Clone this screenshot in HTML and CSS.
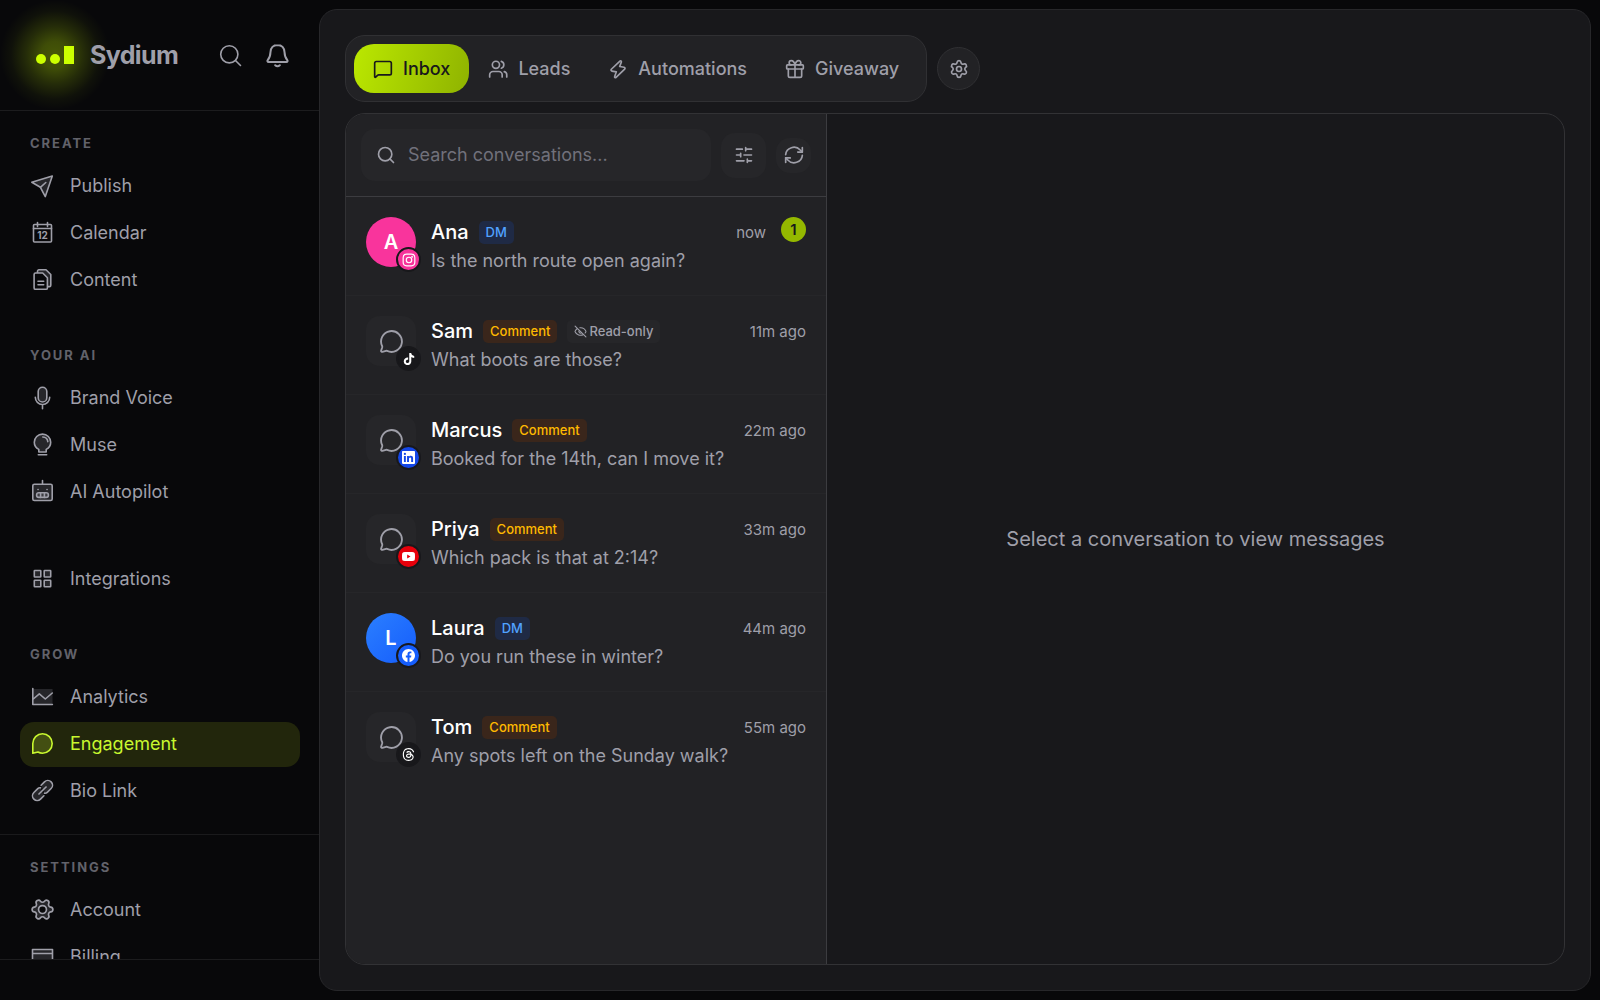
FILE: index.html
```
<!DOCTYPE html>
<html lang="en">
<head>
    <meta charset="UTF-8">
    <meta name="viewport" content="width=device-width, initial-scale=1.0">
    <title>Sydium - Engagement</title>
    <link rel="stylesheet" href="styles.css">
</head>
<body>

    <!-- Shared icons -->
    <svg class="sprite" aria-hidden="true">
        <symbol id="icon-search" viewBox="0 0 24 24"><circle cx="11" cy="11" r="8"/><path d="m21 21-4.3-4.3"/></symbol>
        <symbol id="icon-bubble" viewBox="0 0 24 24"><path d="M2.992 16.342a2 2 0 0 1 .094 1.167l-1.065 3.29a1 1 0 0 0 1.236 1.168l3.413-.998a2 2 0 0 1 1.099.092 10 10 0 1 0-4.777-4.719"/></symbol>
        <symbol id="icon-gear" viewBox="0 0 24 24"><path d="M9.671 4.136a2.34 2.34 0 0 1 4.659 0 2.34 2.34 0 0 0 3.319 1.915 2.34 2.34 0 0 1 2.33 4.033 2.34 2.34 0 0 0 0 3.831 2.34 2.34 0 0 1-2.33 4.033 2.34 2.34 0 0 0-3.319 1.915 2.34 2.34 0 0 1-4.659 0 2.34 2.34 0 0 0-3.32-1.915 2.34 2.34 0 0 1-2.33-4.033 2.34 2.34 0 0 0 0-3.831A2.34 2.34 0 0 1 6.35 6.051a2.34 2.34 0 0 0 3.319-1.915"/><circle cx="12" cy="12" r="3"/></symbol>
    </svg>

    <div class="app">
        <aside class="sidebar">
            <div class="sidebar-header">
                <a href="#" class="brand">
                    <span class="brand-logo">
                        <svg width="50" height="50" viewBox="0 0 50 50" fill="#ccff00"><circle cx="11" cy="29" r="5"/><circle cx="25" cy="29" r="5"/><path d="M34 16h10v18H34z"/></svg>
                    </span>
                    <span class="brand-name">Sydium</span>
                </a>
                <div class="header-actions">
                    <button type="button" class="icon-button" aria-label="Search">
                        <svg class="icon" width="25" height="25" viewBox="0 0 25 25"><circle cx="11.300" cy="11.300" r="8.600"/><path d="m17.500 17.500 5 5"/></svg>
                    </button>
                    <button type="button" class="icon-button" aria-label="Notifications">
                        <svg class="icon icon-bold" width="25" height="25" viewBox="0 0 25 25"><path d="M12.500 2C8.200 2 5.700 5 5.500 9c-.2 4-.8 6-2.700 8-.8.900-.3 2 .8 2h17.800c1.100 0 1.600-1.100.8-2-1.900-2-2.500-4-2.700-8-.2-4-2.700-7-7-7Z"/><path d="M10.200 22.200c1.300 1.200 3.300 1.200 4.600 0"/></svg>
                    </button>
                </div>
            </div>

            <nav class="sidebar-nav">
                <div class="nav-group">
                    <section class="nav-section">
                        <h2>Create</h2>
                        <a href="#" class="nav-item">
                            <svg class="icon duo" width="25" height="25" viewBox="0 0 25 25"><path d="M22.300 3 1.800 9.300l8.600 5 4.900 9.300Z"/><path d="m10.400 14.300 5.400-4.800"/></svg>
                            Publish
                        </a>
                        <a href="#" class="nav-item">
                            <svg class="icon" width="25" height="25" viewBox="0 0 25 25"><rect x="3.500" y="4.500" width="18" height="17.500" rx="1"/><path d="M3.500 8.500h18M7.500 2.500v4M17.500 2.500v4"/><text x="12.500" y="19" class="icon-date">12</text></svg>
                            Calendar
                        </a>
                        <a href="#" class="nav-item">
                            <svg class="icon duo" width="25" height="25" viewBox="0 0 25 25"><path d="M7.500 6V4.200c0-.8.6-1.400 1.400-1.400H16l4.800 4.700v10.700c0 .8-.6 1.400-1.400 1.400h-2"/><path class="solid" d="M5.500 6h7.200l4.700 4.700v10.200c0 .8-.6 1.400-1.400 1.400H5.500c-.8 0-1.400-.6-1.400-1.400V7.400C4.100 6.600 4.700 6 5.500 6Z"/><path d="M8 14.200h5.700M8 17.700h5.700"/></svg>
                            Content
                        </a>
                    </section>

                    <section class="nav-section">
                        <h2>Your AI</h2>
                        <a href="#" class="nav-item">
                            <svg class="icon duo" width="25" height="25" viewBox="0 0 25 25"><rect x="8.200" y="2.200" width="8.600" height="14.800" rx="4.300"/><path class="no-fill" d="M5.300 12.300c0 4 3.200 7.200 7.200 7.200s7.200-3.200 7.200-7.200M12.500 19.500v4.300"/></svg>
                            Brand Voice
                        </a>
                        <a href="#" class="nav-item">
                            <svg class="icon duo" width="25" height="25" viewBox="0 0 25 25"><path d="M8.800 20v-2.600C6 16 4.300 13.400 4.300 10.300a8.200 8.200 0 0 1 16.400 0c0 3.100-1.700 5.700-4.500 7.100V20Z"/><path class="no-fill" d="M12.800 5c2.700.1 4.700 2 5 4.600M8.300 22.800h8.400"/></svg>
                            Muse
                        </a>
                        <a href="#" class="nav-item">
                            <svg class="icon duo" width="25" height="25" viewBox="0 0 25 25"><rect x="2.800" y="5.200" width="19.400" height="16.300" rx="1.600"/><path d="M12.500 1.500v3.700M8 10.500h.1M17 10.500h.1"/><rect x="6.600" y="13.800" width="11.800" height="4.600" rx="2.200"/><path d="M10.600 13.800v4.600M14.400 13.800v4.600"/></svg>
                            AI Autopilot
                        </a>
                    </section>

                    <section class="nav-section">
                        <a href="#" class="nav-item">
                            <svg class="icon duo" width="25" height="25" viewBox="0 0 25 25"><rect x="4.300" y="4.500" width="6.500" height="6.500" rx=".5"/><rect x="14.200" y="4.500" width="6.500" height="6.500" rx=".5"/><rect x="4.300" y="14.200" width="6.500" height="6.500" rx=".5"/><rect x="14.200" y="14.200" width="6.500" height="6.500" rx=".5"/></svg>
                            Integrations
                        </a>
                    </section>

                    <section class="nav-section">
                        <h2>Grow</h2>
                        <a href="#" class="nav-item">
                            <svg class="icon duo" width="25" height="25" viewBox="0 0 25 25"><path class="no-line" d="M3 5h19.500v15.500H3Z"/><path class="no-fill" d="M2.800 4.500v16h19.600M3.300 15l6-5.200 6 5.200 7-6"/></svg>
                            Analytics
                        </a>
                        <a href="#" class="nav-item active" aria-current="page">
                            <svg class="icon duo" width="25" height="25" viewBox="0 0 25 25"><path d="M2.800 22.200V12.500a9.700 9.700 0 1 1 9.700 9.700c-1.700 0-3.200-.4-4.600-1.200Z"/></svg>
                            Engagement
                        </a>
                        <a href="#" class="nav-item">
                            <svg class="icon duo" width="25" height="25" viewBox="0 0 25 25"><g transform="rotate(-45 12.500 12.500)"><path d="M9.800 17.200H5a4.700 4.700 0 0 1 0-9.400h5.500a3 3 0 0 1 2.500 1.400"/><path d="M15.200 7.800H20a4.700 4.700 0 0 1 0 9.400h-5.500a3 3 0 0 1-2.500-1.400"/><path d="M7.500 12.500h10"/></g></svg>
                            Bio Link
                        </a>
                    </section>
                </div>

                <div class="nav-group">
                    <section class="nav-section">
                        <h2>Settings</h2>
                        <a href="#" class="nav-item">
                            <svg class="icon duo" width="25" height="25" viewBox="0 0 24 24"><g transform="rotate(30 12 12)"><path d="M9.671 4.136a2.340 2.340 0 0 1 4.659 0 2.340 2.340 0 0 0 3.319 1.915 2.340 2.340 0 0 1 2.330 4.033 2.340 2.340 0 0 0 0 3.831 2.340 2.340 0 0 1-2.330 4.033 2.340 2.340 0 0 0-3.319 1.915 2.340 2.340 0 0 1-4.659 0 2.340 2.340 0 0 0-3.320-1.915 2.340 2.340 0 0 1-2.330-4.033 2.340 2.340 0 0 0 0-3.831A2.340 2.340 0 0 1 6.350 6.051a2.340 2.340 0 0 0 3.319-1.915"/></g><circle class="solid" cx="12" cy="12" r="3.800"/></svg>
                            Account
                        </a>
                        <a href="#" class="nav-item">
                            <svg class="icon duo" width="25" height="25" viewBox="0 0 25 25"><path d="M2.500 5.500h20v14.500h-20ZM2.500 9.500h20"/></svg>
                            Billing
                        </a>
                    </section>
                </div>
            </nav>

            <div class="sidebar-footer"></div>
        </aside>

        <main class="main">
            <div class="toolbar">
                <div class="tabs" role="tablist">
                    <button type="button" class="tab active" role="tab" aria-selected="true">
                        <svg class="icon" width="20" height="20" viewBox="0 0 24 24"><path d="M22 17a2 2 0 0 1-2 2H6.828a2 2 0 0 0-1.414.586l-2.202 2.202A.710.710 0 0 1 2 21.286V5a2 2 0 0 1 2-2h16a2 2 0 0 1 2 2z"/></svg>
                        Inbox
                    </button>
                    <button type="button" class="tab" role="tab" aria-selected="false">
                        <svg class="icon" width="20" height="20" viewBox="0 0 24 24"><path d="M17 21.500v-2.500a4 4 0 0 0-4-4H6a4 4 0 0 0-4 4v2.500"/><circle cx="9.500" cy="7" r="4.300"/><path d="M16 2.900a4.300 4.300 0 0 1 0 8.200M22.500 21.500v-2.500a4 4 0 0 0-3-3.870"/></svg>
                        Leads
                    </button>
                    <button type="button" class="tab" role="tab" aria-selected="false">
                        <svg class="icon" width="20" height="20" viewBox="0 0 24 24"><path d="M14.300 2.500 4 12.300c-.8.800-.4 2 .7 2.200l5.300.9-2 5.500c-.4 1.200.8 1.900 1.700 1.100L20 12.100c.8-.8.4-2-.7-2.200L14 9l2-5.300c.4-1.300-.8-2-1.700-1.200Z"/></svg>
                        Automations
                    </button>
                    <button type="button" class="tab" role="tab" aria-selected="false">
                        <svg class="icon" width="20" height="20" viewBox="0 0 24 24"><rect x="2" y="7" width="20" height="5" rx="1"/><path d="M12 7v15M20 12v8a2 2 0 0 1-2 2H6a2 2 0 0 1-2-2v-8M7.500 7a2.500 2.500 0 0 1 0-5A4.800 8 0 0 1 12 7a4.800 8 0 0 1 4.500-5 2.500 2.500 0 0 1 0 5"/></svg>
                        Giveaway
                    </button>
                </div>
                <button type="button" class="settings-button" aria-label="Engagement settings">
                    <svg class="icon" width="20" height="20"><use href="#icon-gear"/></svg>
                </button>
            </div>

            <div class="inbox">
                <section class="conversations">
                    <div class="search-bar">
                        <label class="search-field">
                            <svg class="icon" width="20" height="20"><use href="#icon-search"/></svg>
                            <input type="text" placeholder="Search conversations..." aria-label="Search conversations">
                        </label>
                        <button type="button" class="square-button" aria-label="Filters">
                            <svg class="icon" width="20" height="20" viewBox="0 0 24 24"><path d="M10 5H3M12 19H3M14 3v4M16 17v4M21 12h-9M21 19h-5M21 5h-7M8 10v4M8 12H3"/></svg>
                        </button>
                        <button type="button" class="square-button small" aria-label="Refresh">
                            <svg class="icon" width="20" height="20" viewBox="0 0 24 24"><path d="M2 11.500a10 9.500 0 0 1 17.500-5.500L22 8.500"/><path d="M22 3v5.500h-5.500M22 12.500a10 9.500 0 0 1-17.500 5.500L2 15.500"/><path d="M7.500 15.500H2V21"/></svg>
                        </button>
                    </div>

                    <ul class="conversation-list">
                        <li>
                            <button type="button" class="conversation">
                                <span class="avatar pink">A
                                    <span class="platform instagram"><svg width="14" height="14" viewBox="0 0 24 24" fill="none" stroke="#fff" stroke-width="2"><rect x="2" y="2" width="20" height="20" rx="6"/><circle cx="12" cy="12" r="4.700"/><circle cx="17.500" cy="6.500" r=".6"/></svg></span>
                                </span>
                                <span class="details">
                                    <span class="top-line"><span class="name">Ana</span><span class="tag dm">DM</span><span class="time">now</span></span>
                                    <span class="message">Is the north route open again?</span>
                                </span>
                                <span class="unread">1</span>
                            </button>
                        </li>
                        <li>
                            <button type="button" class="conversation">
                                <span class="avatar comment"><svg class="icon" width="25" height="25"><use href="#icon-bubble"/></svg>
                                    <span class="platform tiktok"><svg width="12" height="12" viewBox="0 0 24 24" fill="#fff"><path d="M12.525.020c1.310-.020 2.610-.010 3.910-.020.080 1.530.630 3.090 1.750 4.170 1.120 1.110 2.700 1.620 4.240 1.790v4.030c-1.440-.050-2.890-.350-4.200-.970-.570-.260-1.100-.590-1.620-.930-.010 2.920.010 5.840-.020 8.750-.080 1.400-.540 2.790-1.350 3.940-1.310 1.920-3.580 3.170-5.910 3.210-1.430.080-2.860-.310-4.080-1.030-2.020-1.190-3.440-3.370-3.650-5.710-.020-.5-.030-1-.010-1.490.180-1.900 1.120-3.720 2.580-4.960 1.660-1.440 3.980-2.130 6.150-1.720.020 1.480-.040 2.960-.040 4.440-.990-.320-2.150-.230-3.020.370-.630.410-1.110 1.040-1.360 1.750-.210.510-.150 1.070-.140 1.610.240 1.640 1.820 3.020 3.500 2.870 1.120-.010 2.190-.660 2.770-1.610.190-.330.400-.670.410-1.060.100-1.790.060-3.570.070-5.360.010-4.030-.010-8.050.020-12.070z"/></svg></span>
                                </span>
                                <span class="details">
                                    <span class="top-line"><span class="name">Sam</span><span class="tag">Comment</span><span class="tag read-only"><svg class="icon" width="13" height="13" viewBox="0 0 24 24"><path d="M10.733 5.076a10.744 10.744 0 0 1 11.205 6.575 1 1 0 0 1 0 .696 10.747 10.747 0 0 1-1.444 2.490M14.084 14.158a3 3 0 0 1-4.242-4.242M17.479 17.499a10.750 10.750 0 0 1-15.417-5.151 1 1 0 0 1 0-.696 10.750 10.750 0 0 1 4.446-5.143M2 2l20 20"/></svg>Read-only</span><span class="time">11m ago</span></span>
                                    <span class="message">What boots are those?</span>
                                </span>
                            </button>
                        </li>
                        <li>
                            <button type="button" class="conversation">
                                <span class="avatar comment"><svg class="icon" width="25" height="25"><use href="#icon-bubble"/></svg>
                                    <span class="platform linkedin"><svg width="13" height="13" viewBox="0 0 24 24" fill="#fff"><path d="M20.447 20.452h-3.554v-5.569c0-1.328-.027-3.037-1.852-3.037-1.853 0-2.136 1.445-2.136 2.939v5.667H9.351V9h3.414v1.561h.046c.477-.900 1.637-1.850 3.370-1.850 3.601 0 4.267 2.370 4.267 5.455v6.286zM5.337 7.433a2.062 2.062 0 1 1 0-4.125 2.062 2.062 0 0 1 0 4.125zm1.782 13.019H3.555V9h3.564v11.452zM22.225 0H1.771C.792 0 0 .774 0 1.729v20.542C0 23.227.792 24 1.771 24h20.451C23.200 24 24 23.227 24 22.271V1.729C24 .774 23.200 0 22.222 0h.003z"/></svg></span>
                                </span>
                                <span class="details">
                                    <span class="top-line"><span class="name">Marcus</span><span class="tag">Comment</span><span class="time">22m ago</span></span>
                                    <span class="message">Booked for the 14th, can I move it?</span>
                                </span>
                            </button>
                        </li>
                        <li>
                            <button type="button" class="conversation">
                                <span class="avatar comment"><svg class="icon" width="25" height="25"><use href="#icon-bubble"/></svg>
                                    <span class="platform youtube"><svg width="13" height="13" viewBox="0 0 24 24" fill="#fff"><path d="M23.498 6.186a3.016 3.016 0 0 0-2.122-2.136C19.505 3.545 12 3.545 12 3.545s-7.505 0-9.377.505A3.017 3.017 0 0 0 .502 6.186C0 8.070 0 12 0 12s0 3.930.502 5.814a3.016 3.016 0 0 0 2.122 2.136c1.871.505 9.376.505 9.376.505s7.505 0 9.377-.505a3.015 3.015 0 0 0 2.122-2.136C24 15.930 24 12 24 12s0-3.930-.502-5.814zM9.545 15.568V8.432L15.818 12l-6.273 3.568z"/></svg></span>
                                </span>
                                <span class="details">
                                    <span class="top-line"><span class="name">Priya</span><span class="tag">Comment</span><span class="time">33m ago</span></span>
                                    <span class="message">Which pack is that at 2:14?</span>
                                </span>
                            </button>
                        </li>
                        <li>
                            <button type="button" class="conversation">
                                <span class="avatar blue">L
                                    <span class="platform facebook"><svg width="13" height="13" viewBox="0 0 24 24" fill="#fff"><path d="M24 12.073c0-6.627-5.373-12-12-12s-12 5.373-12 12c0 5.990 4.388 10.954 10.125 11.854v-8.385H7.078v-3.470h3.047V9.430c0-3.007 1.792-4.669 4.533-4.669 1.312 0 2.686.235 2.686.235v2.953H15.830c-1.491 0-1.956.925-1.956 1.874v2.250h3.328l-.532 3.470h-2.796v8.385C19.612 23.027 24 18.062 24 12.073z"/></svg></span>
                                </span>
                                <span class="details">
                                    <span class="top-line"><span class="name">Laura</span><span class="tag dm">DM</span><span class="time">44m ago</span></span>
                                    <span class="message">Do you run these in winter?</span>
                                </span>
                            </button>
                        </li>
                        <li>
                            <button type="button" class="conversation">
                                <span class="avatar comment"><svg class="icon" width="25" height="25"><use href="#icon-bubble"/></svg>
                                    <span class="platform threads"><svg width="13" height="13" viewBox="0 0 24 24" fill="#fff"><path d="M12.186 24h-.007c-3.581-.024-6.334-1.205-8.184-3.509C2.350 18.440 1.500 15.586 1.472 12.010v-.017c.030-3.579.879-6.430 2.525-8.482C5.845 1.205 8.600.024 12.180 0h.014c2.746.020 5.043.725 6.826 2.098 1.677 1.290 2.858 3.130 3.509 5.467l-2.040.569c-1.104-3.960-3.898-5.984-8.304-6.015-2.910.022-5.110.936-6.540 2.717C4.307 6.504 3.616 8.914 3.589 12c.027 3.086.718 5.496 2.057 7.164 1.430 1.783 3.631 2.698 6.540 2.717 2.623-.020 4.358-.631 5.800-2.045 1.647-1.613 1.618-3.593 1.090-4.798-.310-.710-.873-1.300-1.634-1.750-.192 1.352-.622 2.446-1.284 3.272-.886 1.102-2.140 1.704-3.730 1.790-1.202.065-2.361-.218-3.259-.801-1.063-.689-1.685-1.740-1.752-2.964-.065-1.190.408-2.285 1.330-3.082.880-.760 2.119-1.207 3.583-1.291a13.853 13.853 0 0 1 3.020.142c-.126-.742-.375-1.332-.750-1.757-.513-.586-1.308-.883-2.359-.890h-.029c-.844 0-1.992.232-2.721 1.320L7.734 7.847c.980-1.454 2.568-2.256 4.478-2.256h.044c3.194.020 5.097 1.975 5.287 5.388.108.046.216.094.321.142 1.490.700 2.580 1.761 3.154 3.070.797 1.820.871 4.790-1.548 7.158-1.850 1.810-4.094 2.628-7.277 2.650Zm1.003-11.690c-.242 0-.487.007-.739.021-1.836.103-2.980.946-2.916 2.143.067 1.256 1.452 1.839 2.784 1.767 1.224-.065 2.818-.543 3.086-3.710a10.500 10.500 0 0 0-2.215-.221z"/></svg></span>
                                </span>
                                <span class="details">
                                    <span class="top-line"><span class="name">Tom</span><span class="tag">Comment</span><span class="time">55m ago</span></span>
                                    <span class="message">Any spots left on the Sunday walk?</span>
                                </span>
                            </button>
                        </li>
                    </ul>
                </section>

                <section class="thread">
                    <p>Select a conversation to view messages</p>
                </section>
            </div>
        </main>
    </div>

</body>
</html>
```
FILE: styles.css
```
* {
    box-sizing: border-box;
}

body {
    margin: 0;
    background-color: #08080a;
    color: #9f9fa9;
    font-family: Inter, 'Liberation Sans', sans-serif;
    font-size: 18px;
}

a {
    color: inherit;
    text-decoration: none;
}

button {
    padding: 0;
    border: none;
    background: none;
    color: inherit;
    font: inherit;
    cursor: pointer;
}

.sprite {
    display: none;
}

.icon {
    flex-shrink: 0;
    fill: none;
    stroke: currentColor;
    stroke-width: 1.6;
    stroke-linecap: round;
    stroke-linejoin: round;
}

.app {
    display: flex;
    height: 100vh;
}

/* Sidebar */
.sidebar {
    display: flex;
    flex-direction: column;
    flex: 0 0 319px;
}

.sidebar-header {
    display: flex;
    align-items: center;
    justify-content: space-between;
    height: 111px;
    flex-shrink: 0;
    padding: 0 19px 0 30px;
    border-bottom: 1px solid #1c1c1e;
}

.brand {
    display: flex;
    align-items: center;
    gap: 10px;
}

.brand-logo {
    position: relative;
    display: flex;
}

.brand-logo::before {
    content: "";
    position: absolute;
    inset: -30px;
    background: radial-gradient(closest-side, rgba(204, 255, 0, 0.32), rgba(204, 255, 0, 0.28) 25%, rgba(204, 255, 0, 0.15) 52%, rgba(204, 255, 0, 0.04) 80%, transparent);
}

.brand-logo svg {
    position: relative;
}

.brand-name {
    font-size: 25px;
    font-weight: 700;
    letter-spacing: -0.025em;
    position: relative;
}

.header-actions {
    display: flex;
    gap: 2px;
}

.icon-button {
    display: flex;
    align-items: center;
    justify-content: center;
    width: 45px;
    height: 45px;
}

.icon-bold {
    stroke-width: 2;
}

.sidebar-nav {
    flex: 1;
    min-height: 0;
    overflow: hidden;
}

.nav-group {
    display: flex;
    flex-direction: column;
    gap: 42px;
    padding: 22px 19px 20px 20px;
}

.nav-group + .nav-group {
    border-top: 1px solid #1a1a1c;
}

.nav-section {
    display: flex;
    flex-direction: column;
    gap: 2px;
}

.nav-section h2 {
    margin: 0 0 9px;
    padding-left: 10px;
    color: #62626a;
    font-size: 13px;
    font-weight: 700;
    line-height: 20px;
    letter-spacing: 0.15em;
    text-transform: uppercase;
}

.nav-item {
    display: flex;
    align-items: center;
    gap: 15px;
    height: 45px;
    padding: 0 10px 2px;
    border-radius: 14px;
    line-height: 24px;
}

.nav-item.active {
    background-color: #22260c;
    color: #c8f72f;
}

.duo {
    fill: rgba(159, 159, 169, 0.2);
}

.active .duo {
    fill: rgba(200, 247, 47, 0.2);
}

.solid {
    fill: #08080a;
}

.no-fill {
    fill: none;
}

.no-line {
    stroke: none;
}

.icon-date {
    fill: currentColor;
    stroke: none;
    font-size: 10px;
    font-weight: 700;
    text-anchor: middle;
}

.sidebar-footer {
    height: 41px;
    flex-shrink: 0;
    border-top: 1px solid #1c1c1e;
}

/* Main panel */
.main {
    display: flex;
    flex-direction: column;
    flex: 1;
    gap: 11px;
    min-width: 0;
    margin: 9px 9px 9px 0;
    padding: 25px;
    border: 1px solid #27272a;
    border-radius: 18px;
    background-color: #18181b;
}

.toolbar {
    display: flex;
    align-items: center;
    gap: 10px;
}

.tabs {
    display: flex;
    padding: 8px;
    border: 1px solid #303033;
    border-radius: 20px;
    background-color: #222225;
}

.tab {
    display: flex;
    align-items: center;
    gap: 10px;
    height: 49px;
    padding: 0 19px;
    border-radius: 20px;
    font-weight: 500;
}

.toolbar .icon,
.search-bar .icon {
    stroke-width: 2;
}

.tab.active {
    background: linear-gradient(105deg, #bbe800, #8fb300);
    color: #18181b;
}

.settings-button {
    display: flex;
    align-items: center;
    justify-content: center;
    width: 43px;
    height: 43px;
    border: 1px solid #303033;
    border-radius: 50%;
    background-color: #222225;
}

.inbox {
    display: flex;
    flex: 1;
    min-height: 0;
    overflow: hidden;
    border: 1px solid #323235;
    border-radius: 20px;
}

/* Conversation list */
.conversations {
    flex: 0 0 479px;
    border-right: 1px solid #3c3c40;
    background-color: #222225;
}

.search-bar {
    display: flex;
    align-items: center;
    gap: 10px;
    padding: 15px;
    border-bottom: 1px solid #3c3c40;
}

.search-field {
    display: flex;
    align-items: center;
    flex: 1;
    gap: 12px;
    height: 52px;
    padding: 0 15px;
    border-radius: 14px;
    background-color: #262629;
}

.search-field input {
    flex: 1;
    min-width: 0;
    padding: 0 0 2px;
    border: none;
    outline: none;
    background: none;
    color: #fff;
    font: inherit;
}

.search-field input::placeholder {
    color: #71717b;
}

.square-button {
    display: flex;
    align-items: center;
    justify-content: center;
    width: 45px;
    height: 45px;
    border-radius: 14px;
    background-color: #262629;
}

.square-button.small {
    width: 35px;
    height: 35px;
}

.conversation-list {
    margin: 0;
    padding: 0;
    list-style: none;
}

.conversation {
    display: flex;
    align-items: flex-start;
    gap: 15px;
    width: 100%;
    padding: 20px;
    border-bottom: 1px solid #262629;
    text-align: left;
}

.conversation-list li:last-child .conversation {
    border-bottom: none;
}

.avatar {
    position: relative;
    display: flex;
    align-items: center;
    justify-content: center;
    flex-shrink: 0;
    width: 50px;
    height: 50px;
    border-radius: 50%;
    color: #fff;
    font-size: 20px;
    font-weight: 600;
}

.avatar.pink {
    background-color: #f9349c;
}

.avatar.blue {
    background: linear-gradient(135deg, #2b7fff, #155dfc);
}

.avatar.comment {
    border-radius: 14px;
    background-color: #262629;
    color: #9f9fa9;
}

.avatar .icon {
    stroke-width: 1.8;
}

/* Network badge on the avatar corner */
.platform {
    position: absolute;
    right: -5px;
    bottom: -5px;
    display: flex;
    align-items: center;
    justify-content: center;
    width: 25px;
    height: 25px;
    border: 2px solid #18181b;
    border-radius: 50%;
    background-color: #18181b;
}

.platform.instagram {
    background-color: #f6339a;
}

.platform.linkedin {
    background-color: #1447e6;
}

.platform.youtube {
    background-color: #e7000b;
}

.platform.facebook {
    background-color: #155dfc;
}

.details {
    flex: 1;
    min-width: 0;
}

.top-line {
    display: flex;
    align-items: center;
    height: 30px;
    gap: 10px;
}

.name {
    color: #fff;
    font-size: 20px;
    font-weight: 500;
}

.tag {
    display: flex;
    align-items: center;
    gap: 2px;
    height: 23px;
    padding: 0 7px;
    border-radius: 5px;
    background-color: #3a261b;
    color: #ffb900;
    font-size: 13px;
    font-weight: 500;
}

.tag.dm {
    background-color: #1f2a45;
    color: #51a2ff;
}

.tag.read-only {
    background-color: #262629;
    color: #9f9fa9;
}

.tag .icon {
    stroke-width: 2;
}

.time {
    margin-left: auto;
    font-size: 15px;
}

.message {
    display: block;
    overflow: hidden;
    line-height: 28px;
    text-overflow: ellipsis;
    white-space: nowrap;
}

.unread {
    min-width: 25px;
    border-radius: 50%;
    background-color: #94b800;
    color: #18181b;
    font-size: 15px;
    font-weight: 600;
    line-height: 25px;
    text-align: center;
}

.thread {
    display: flex;
    align-items: center;
    justify-content: center;
    flex: 1;
}

.thread p {
    margin: 0;
    font-size: 20px;
}
```
